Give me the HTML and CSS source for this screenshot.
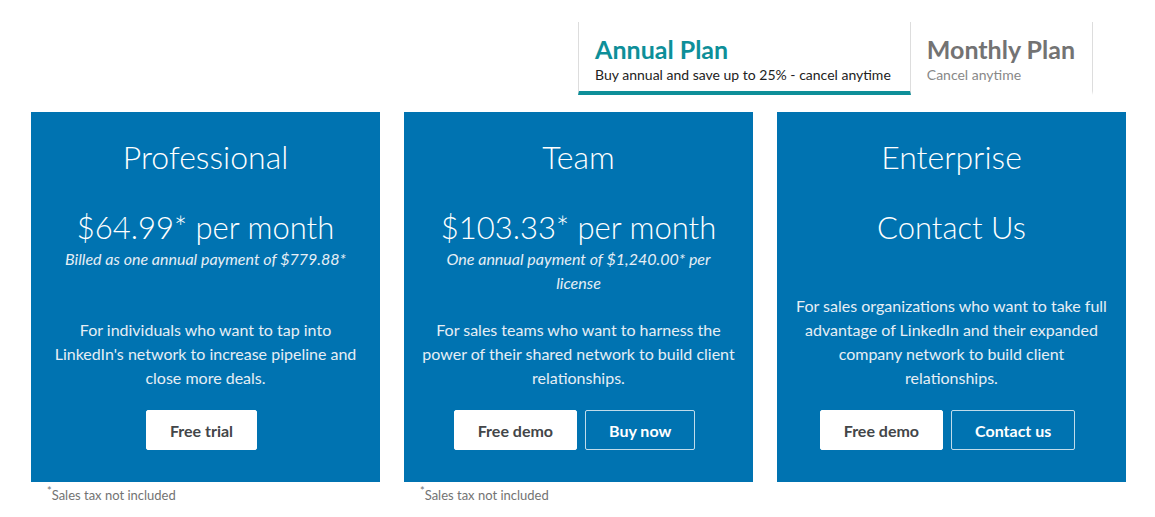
FILE: index.html
```html
<!DOCTYPE html>
<html lang="en">

<head>
    <meta charset="UTF-8">
    <meta name="viewport" content="width=device-width, initial-scale=1.0">
    <title>Sales Navigator plans</title>
    <link rel="stylesheet" href="styles.css">
</head>

<body>
    <div class="wrapper">
        <div class="planTabs">
            <div class="planTab active">
                <span class="tabTitle">Annual Plan</span>
                <span class="tabSub">Buy annual and save up to 25% - cancel anytime</span>
            </div>
            <div class="planTab">
                <span class="tabTitle">Monthly Plan</span>
                <span class="tabSub">Cancel anytime</span>
            </div>
        </div>

        <div class="planGrid">
            <div class="planCol">
                <div class="planCard">
                    <h2 class="planName">Professional</h2>
                    <p class="planPrice">$64.99* per month</p>
                    <p class="planBilled">Billed as one annual payment of $779.88*</p>
                    <div class="planBottom">
                        <p class="planDesc">For individuals who want to tap into LinkedIn's network to increase pipeline and close more deals.</p>
                        <div class="planButtons">
                            <button class="btnWhite">Free trial</button>
                        </div>
                    </div>
                </div>
                <p class="taxNote"><sup>*</sup>Sales tax not included</p>
            </div>

            <div class="planCol">
                <div class="planCard">
                    <h2 class="planName">Team</h2>
                    <p class="planPrice">$103.33* per month</p>
                    <p class="planBilled">One annual payment of $1,240.00* per license</p>
                    <div class="planBottom">
                        <p class="planDesc">For sales teams who want to harness the power of their shared network to build client relationships.</p>
                        <div class="planButtons">
                            <button class="btnWhite">Free demo</button>
                            <button class="btnOutline">Buy now</button>
                        </div>
                    </div>
                </div>
                <p class="taxNote"><sup>*</sup>Sales tax not included</p>
            </div>

            <div class="planCol">
                <div class="planCard">
                    <h2 class="planName">Enterprise</h2>
                    <p class="planPrice">Contact Us</p>
                    <div class="planBottom">
                        <p class="planDesc">For sales organizations who want to take full advantage of LinkedIn and their expanded company network to build client relationships.</p>
                        <div class="planButtons">
                            <button class="btnWhite">Free demo</button>
                            <button class="btnOutline">Contact us</button>
                        </div>
                    </div>
                </div>
            </div>
        </div>
    </div>
</body>

</html>
```

FILE: styles.css
```css
body {
    margin: 0;
    font-family: 'Lato', 'Liberation Sans', sans-serif;
    background-color: #fff;
    color: #333;
}

.wrapper {
    width: 1095px;
    margin-left: 31px;
    padding-top: 22px;
}

.planTabs {
    display: flex;
    justify-content: flex-end;
    padding-right: 33px;
}

.planTab {
    display: flex;
    flex-direction: column;
    padding: 11px 17px 6px 16px;
    border-right: 1px solid #ddd;
    border-bottom: 4px solid transparent;
}

.planTab.active {
    border-left: 1px solid #ddd;
    border-bottom-color: #0e8f99;
    padding-right: 19px;
}

.tabTitle {
    font-size: 25px;
    line-height: 32px;
    font-weight: 700;
    color: #737373;
}

.tabSub {
    font-size: 14px;
    line-height: 20px;
    color: #888;
}

.planTab.active .tabTitle {
    color: #0e8f99;
}

.planTab.active .tabSub {
    color: #222;
}

.planGrid {
    display: grid;
    grid-template-columns: repeat(3, 1fr);
    gap: 24px;
    margin-top: 17px;
}

.planCard {
    background-color: #0073b1;
    color: #fff;
    height: 370px;
    box-sizing: border-box;
    padding: 25px 16px 32px;
    display: flex;
    flex-direction: column;
    text-align: center;
}

.planName,
.planPrice {
    margin: 0;
    font-size: 32px;
    line-height: 40px;
    font-weight: 300;
}

.planPrice {
    margin-top: 30px;
    font-size: 31px;
}

.planBilled {
    margin: 0;
    padding: 0 15px;
    font-size: 16px;
    line-height: 24px;
    font-style: italic;
    color: #e6eef5;
}

.planBottom {
    margin-top: auto;
}

.planDesc {
    margin: 0 0 20px;
    font-size: 16px;
    line-height: 24px;
    color: #e6eef5;
}

.planButtons {
    display: flex;
    justify-content: center;
}

.planButtons button {
    height: 40px;
    padding: 0 23px;
    margin-right: 8px;
    border-radius: 2px;
    font-family: inherit;
    font-size: 16px;
    font-weight: 700;
    cursor: pointer;
}

.btnWhite {
    background-color: #fff;
    color: #434649;
    border: 1px solid #fff;
}

.btnOutline {
    background-color: transparent;
    color: #fff;
    border: 1px solid rgba(255, 255, 255, 0.75);
}

.taxNote {
    margin: 5px 0 0 16px;
    font-size: 13px;
    line-height: 16px;
    color: #737373;
}

.taxNote sup {
    font-size: 11px;
    vertical-align: 5px;
    line-height: 0;
}
```
